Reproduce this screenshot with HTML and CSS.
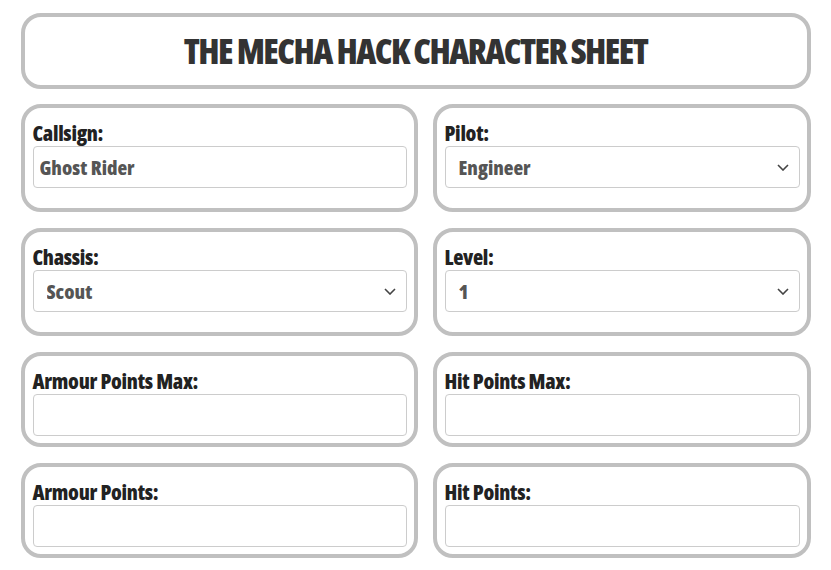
FILE: index.html
```html
<!DOCTYPE html>
<html lang="en">
<head>
<meta charset="utf-8">
<title>The Mecha Hack Character Sheet</title>
<link rel="stylesheet" href="styles.css">
</head>
<body>
<div class="sheet">
  <header class="card title-card">
    <h1 class="title">THE MECHA HACK CHARACTER SHEET</h1>
  </header>
  <div class="grid">
    <div class="card field field--spaced">
      <label class="label" for="callsign">Callsign:</label>
      <input class="control control--text" id="callsign" type="text" value="Ghost Rider">
    </div>
    <div class="card field field--spaced">
      <label class="label" for="pilot">Pilot:</label>
      <div class="select-wrap">
        <select class="control control--select" id="pilot">
          <option>Engineer</option>
        </select>
        <svg class="chevron" width="12" height="7" viewBox="0 0 12 7"><path d="M1 1 L6 6 L11 1" fill="none" stroke="#444" stroke-width="1.6"/></svg>
      </div>
    </div>
    <div class="card field field--spaced">
      <label class="label" for="chassis">Chassis:</label>
      <div class="select-wrap">
        <select class="control control--select" id="chassis">
          <option>Scout</option>
        </select>
        <svg class="chevron" width="12" height="7" viewBox="0 0 12 7"><path d="M1 1 L6 6 L11 1" fill="none" stroke="#444" stroke-width="1.6"/></svg>
      </div>
    </div>
    <div class="card field field--spaced">
      <label class="label" for="level">Level:</label>
      <div class="select-wrap">
        <select class="control control--select" id="level">
          <option>1</option>
        </select>
        <svg class="chevron" width="12" height="7" viewBox="0 0 12 7"><path d="M1 1 L6 6 L11 1" fill="none" stroke="#444" stroke-width="1.6"/></svg>
      </div>
    </div>
    <div class="card field">
      <label class="label" for="apmax">Armour Points Max:</label>
      <input class="control control--text" id="apmax" type="text">
    </div>
    <div class="card field">
      <label class="label" for="hpmax">Hit Points Max:</label>
      <input class="control control--text" id="hpmax" type="text">
    </div>
    <div class="card field">
      <label class="label" for="ap">Armour Points:</label>
      <input class="control control--text" id="ap" type="text">
    </div>
    <div class="card field">
      <label class="label" for="hp">Hit Points:</label>
      <input class="control control--text" id="hp" type="text">
    </div>
  </div>
</div>
</body>
</html>
```
FILE: styles.css
```css
* { box-sizing: border-box; }

html, body {
  margin: 0;
  padding: 0;
  background: #ffffff;
}

body {
  font-family: "Open Sans", "DejaVu Sans", sans-serif;
  font-stretch: 75%;
  font-weight: 800;
  color: #222222;
}

.sheet {
  width: 790px;
  margin: 13px auto 0;
}

.card {
  border: 4px solid #c0c0c0;
  border-radius: 20px;
  background: #ffffff;
}

.title-card {
  height: 76px;
  display: flex;
  align-items: center;
  justify-content: center;
}

.title {
  margin: 0;
  font-size: 35px;
  line-height: 40px;
  font-weight: 800;
  color: #333333;
  letter-spacing: -1.55px;
}

.grid {
  margin-top: 15px;
  display: grid;
  grid-template-columns: 397px 378px;
  column-gap: 15px;
  row-gap: 16px;
}

.field {
  display: flex;
  flex-direction: column;
  padding: 12px 7px 7px 8px;
}

.field--spaced {
  padding-bottom: 20px;
}

.label {
  display: block;
  font-size: 21px;
  line-height: 26px;
  color: #222222;
  letter-spacing: -0.3px;
}

.select-wrap {
  position: relative;
}

.control {
  display: block;
  width: 100%;
  height: 42px;
  margin: 0;
  border: 1px solid #cccccc;
  border-radius: 4px;
  background: #ffffff;
  font-family: inherit;
  font-stretch: 75%;
  font-weight: 800;
  font-size: 20px;
  color: #555555;
  outline: none;
}

.control--text {
  padding: 0 6px;
}

.control--select {
  appearance: none;
  -webkit-appearance: none;
  padding: 0 30px 0 13px;
}

.chevron {
  position: absolute;
  right: 11px;
  top: 18px;
  pointer-events: none;
}
```
